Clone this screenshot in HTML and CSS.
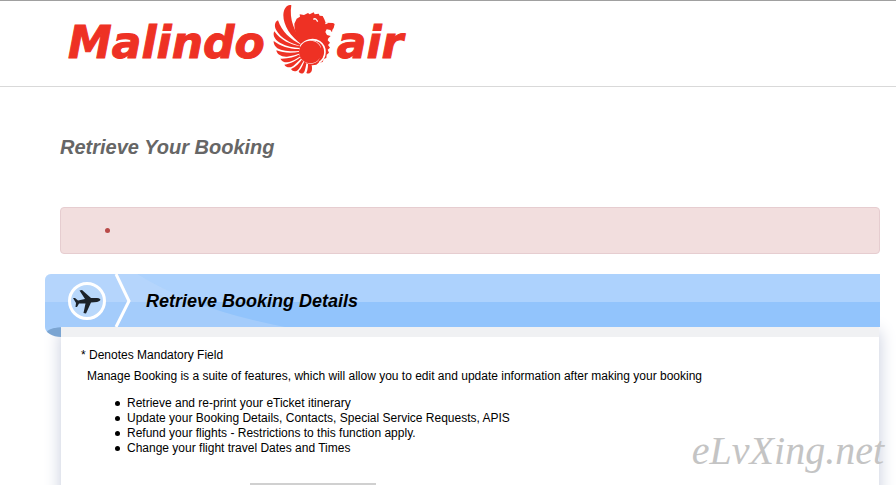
FILE: index.html
```html
<!DOCTYPE html>
<html lang="en">
<head>
  <meta charset="utf-8">
  <title>Malindo Air - Retrieve Your Booking</title>
  <link rel="stylesheet" href="styles.css">
</head>
<body>
  <header class="site-header">
    <a href="#" class="logo">
      <span class="logo-text">Malindo</span>
      <svg class="logo-lion" viewBox="126 12 189 213" aria-hidden="true">
        <g fill="#ee3124">
          <path d="M181 16C170 12 158 24 157 45C157 76 178 110 213 134L218 128C190 98 174 57 181 16Z"/>
          <path d="M141 61C131 65 129 79 136 91C149 115 179 130 207 138L211 134C178 119 152 94 141 61Z"/>
          <path d="M130 94C124 104 131 120 148 129C167 140 187 143 207 144L208 139C179 135 147 119 130 94Z"/>
          <path d="M128 123C127 137 139 148 156 151C174 155 191 154 206 153L206 147C178 148 149 139 128 123Z"/>
          <path d="M136 151C137 163 151 171 168 170C184 169 197 164 208 160L206 155C182 160 157 159 136 151Z"/>
          <path d="M148 176C153 187 168 190 181 184C193 179 203 172 211 167L208 162C190 171 170 177 148 176Z"/>
          <path d="M160 194C167 205 181 204 190 195C199 187 207 179 215 172L212 169C197 182 179 192 160 194Z"/>
          <path d="M180 207C186 217 198 215 204 206C211 195 216 186 221 177L216 174C206 189 194 202 180 207Z"/>
          <path d="M203 214C206 223 218 223 221 213C225 201 226 190 228 180L222 178C217 193 212 206 203 214Z"/>
          <path d="M226 219C234 224 243 218 243 207C244 197 240 189 237 183L230 181C232 195 231 209 226 219Z"/>
          <path d="M190 71L197 56L207 50L206 43L219 45L231 39L236 43L248 37L251 43L263 41L266 47L275 48L280 58L284 68L306 69L311 72L308 84L304 90L303 97L298 90L287 88L283 96L288 105L299 108L292 115L290 121L297 128L291 135L297 143L290 149L294 158L287 164L286 174L278 177L275 186L263 188L256 194L244 196C210 190 204 160 214 140C200 115 190 96 190 71Z"/>
        </g>
        <path d="M208 139C220 119 247 113 266 125C288 140 287 174 264 188" fill="none" stroke="#fff" stroke-width="5"/>
        <circle cx="239" cy="156" r="35" fill="#fff"/>
        <circle cx="238" cy="156" r="34" fill="#ee3124"/>
        <path d="M268 134C284 154 277 178 256 190C268 177 273 158 268 134Z" fill="#ee3124"/>
        <path d="M247 58Q253 54 257 60L260 65M283 71L290 68" fill="none" stroke="#fff" stroke-width="4"/>
      </svg>
      <span class="logo-text">air</span>
    </a>
  </header>

  <main class="page">
    <h1 class="page-title">Retrieve Your Booking</h1>

    <div class="alert" role="alert">
      <ul class="dots">
        <li></li>
      </ul>
    </div>

    <section class="booking">
      <div class="banner">
        <svg class="banner-shine" viewBox="0 0 240 53" aria-hidden="true">
          <path d="M0 0H92Q150 36 240 53H0Z" fill="#c6dcf8" fill-opacity="0.35"/>
        </svg>
        <div class="banner-icon">
          <svg viewBox="0 0 90 53" aria-hidden="true">
            <circle cx="42" cy="27" r="17.5" fill="#b9d8fb" stroke="#fff" stroke-width="3"/>
            <path d="M55 25C56 26 55 27 52 28L46 28.5L41 39.5L38.5 39L40.5 29.5L34 29.5L32 33L30.5 33L31 29L29.5 26.5L28 24L30 24L33 26.5L40 25L34.5 16.5L37 16L46 24L52 24Q54 24 55 25Z" fill="#1c2228"/>
            <path d="M71 0L84 27L71 53" fill="none" stroke="#fff" stroke-width="3"/>
          </svg>
        </div>
        <h2 class="banner-title">Retrieve Booking Details</h2>
      </div>

      <div class="panel">
        <p class="mandatory">* Denotes Mandatory Field</p>
        <p class="intro">Manage Booking is a suite of features, which will allow you to edit and update information after making your booking</p>
        <ul class="features dots">
          <li>Retrieve and re-print your eTicket itinerary</li>
          <li>Update your Booking Details, Contacts, Special Service Requests, APIS</li>
          <li>Refund your flights - Restrictions to this function apply.</li>
          <li>Change your flight travel Dates and Times</li>
        </ul>
        <input type="text" class="reference" aria-label="Booking reference">
      </div>
    </section>
  </main>

  <div class="watermark">eLvXing.net</div>
</body>
</html>
```

FILE: styles.css
```css
* {
  box-sizing: border-box;
}

html {
  height: 100%;
  overflow: hidden;
}

body {
  position: relative;
  height: 100%;
  margin: 0;
  overflow: hidden;
  background: #fff;
  color: #000;
  font-family: "Liberation Sans", Arial, sans-serif;
  font-size: 12px;
  line-height: 15px;
}

h1, h2, p, ul {
  margin: 0;
}

/* Header */
.site-header {
  padding: 3px 68px 11px;
  border-top: 1px solid #a0a0a0;
  border-bottom: 1px solid #d9d9d9;
}

.logo {
  display: flex;
  align-items: center;
  color: #ee3124;
  text-decoration: none;
}

.logo-text {
  padding-top: 7px;
  font-family: "DejaVu Sans", sans-serif;
  font-size: 44px;
  font-style: italic;
  font-weight: bold;
  line-height: 48px;
  -webkit-text-stroke: 1px #ee3124;
}

.logo-lion {
  width: 63px;
  height: 71px;
  margin: 0 1px 0 8px;
}

/* Page */
.page {
  padding: 48px 16px 0 60px;
}

.page-title {
  color: #666;
  font-size: 20px;
  font-style: italic;
  line-height: 24px;
}

.dots {
  list-style: none;
}

.dots li {
  display: flex;
  align-items: center;
  height: 15px;
}

.dots li::before {
  content: "";
  width: 5px;
  height: 5px;
  margin-right: 7px;
  border-radius: 50%;
  background: currentColor;
}

.alert {
  margin-top: 48px;
  padding: 15px;
  border: 1px solid #e6cdd0;
  border-radius: 4px;
  background: #f2dede;
  color: #b94a48;
}

.alert ul {
  padding-left: 29px;
}

.booking {
  margin-top: 20px;
}

/* Blue ribbon that sticks out to the left of the panel */
.banner {
  position: relative;
  display: flex;
  align-items: center;
  margin-left: -15px;
  height: 53px;
  border-radius: 6px 0 0 0;
  background: linear-gradient(#add2fd 28px, #92c4fc 28px);
}

.banner::after {
  content: "";
  position: absolute;
  top: 100%;
  left: 0;
  width: 16px;
  height: 10px;
  border-radius: 0 0 0 16px / 0 0 0 10px;
  background: radial-gradient(ellipse 16px 7px at 16px 7px, #7ba5d2 90%, #a5cdfb);
}

.banner-shine {
  position: absolute;
  top: 0;
  left: 0;
  width: 240px;
  height: 53px;
  border-radius: 6px 0 0 0;
}

.banner-icon,
.banner-title {
  position: relative;
}

.banner-icon svg {
  display: block;
  width: 90px;
  height: 53px;
}

.banner-title {
  margin-left: 11px;
  font-size: 18px;
  font-style: italic;
  line-height: 24px;
}

.panel {
  margin: 0 1px;
  padding: 11px 20px;
  border-top: 10px solid #f0f1f3;
  background: #fff;
  box-shadow: 0 4px 16px #c5cbdc;
}

.intro {
  margin-top: 6px;
  padding-left: 6px;
}

.features {
  margin-top: 12px;
  padding-left: 34px;
}

.reference {
  display: block;
  width: 126px;
  height: 24px;
  margin: 27px 0 0 169px;
  border: 2px solid #d0d0d0;
  background: #fff;
}

.watermark {
  position: absolute;
  right: 12px;
  bottom: 14px;
  color: #c4c4c4;
  font-family: "Liberation Serif", serif;
  font-size: 40px;
  font-style: italic;
  line-height: 40px;
}
```
